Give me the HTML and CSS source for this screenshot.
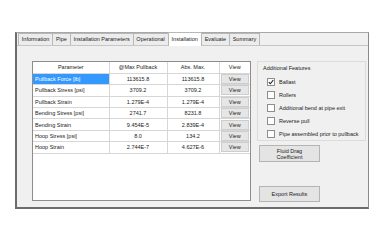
FILE: index.html
```html
<!DOCTYPE html>
<html lang="en">
<head>
  <meta charset="UTF-8" />
  <title>Installation</title>
  <link rel="stylesheet" href="styles.css">
</head>
<body>
  <div class="window">
    <div class="tabs">
      <span class="tab">Information</span>
      <span class="tab">Pipe</span>
      <span class="tab">Installation Parameters</span>
      <span class="tab">Operational</span>
      <span class="tab active">Installation</span>
      <span class="tab">Evaluate</span>
      <span class="tab">Summary</span>
    </div>
    <div class="panel">
      <div class="grid">
        <table>
          <colgroup>
            <col style="width: 76px">
            <col style="width: 58px">
            <col style="width: 52px">
            <col style="width: 31px">
          </colgroup>
          <thead>
            <tr>
              <th>Parameter</th>
              <th>@Max Pullback</th>
              <th>Abs. Max.</th>
              <th>View</th>
            </tr>
          </thead>
          <tbody id="rows"></tbody>
        </table>
      </div>
      <div class="side">
        <div class="features">
          <div class="features-title">Additional Features</div>
          <label class="check"><span class="box checked"><svg viewBox="0 0 8 8" width="6" height="6"><path d="M1 4.2 L3.1 6.3 L7 1.6" fill="none" stroke="#222" stroke-width="1.4"/></svg></span>Ballast</label>
          <label class="check"><span class="box"></span>Rollers</label>
          <label class="check"><span class="box"></span>Additional bend at pipe exit</label>
          <label class="check"><span class="box"></span>Reverse pull</label>
          <label class="check"><span class="box"></span>Pipe assembled prior to pullback</label>
        </div>
        <button class="btn btn-drag">Fluid Drag<br>Coefficient</button>
        <button class="btn btn-export">Export Results</button>
      </div>
    </div>
  </div>

  <script>
    const results = [
      { name: "Pullback Force [lb]", atMax: "113615.8", absMax: "113615.8" },
      { name: "Pullback Stress [psi]", atMax: "3709.2", absMax: "3709.2" },
      { name: "Pullback Strain", atMax: "1.279E-4", absMax: "1.279E-4" },
      { name: "Bending Stress [psi]", atMax: "2741.7", absMax: "8231.8" },
      { name: "Bending Strain", atMax: "9.454E-5", absMax: "2.839E-4" },
      { name: "Hoop Stress [psi]", atMax: "8.0", absMax: "134.2" },
      { name: "Hoop Strain", atMax: "2.744E-7", absMax: "4.627E-6" }
    ];

    const tbody = document.getElementById("rows");
    results.forEach((r, i) => {
      tbody.innerHTML += `<tr>
        <td class="name${i === 0 ? " selected" : ""}">${r.name}</td>
        <td>${r.atMax}</td>
        <td>${r.absMax}</td>
        <td class="view"><span class="view-btn">View</span></td>
      </tr>`;
    });
  </script>
</body>
</html>
```

FILE: styles.css
```css
* {
  box-sizing: border-box;
}
body {
  margin: 0;
  background: #fff;
  font-family: 'Liberation Sans', Arial, sans-serif;
  font-size: 5.5px;
  color: #222;
}
.window {
  margin: 32px 0 0 15px;
  width: 354px;
  height: 177px;
  border-left: 2px solid #6c6c6c;
  border-top: 1px solid #a8a8a8;
  border-right: 1px solid #8a8a8a;
  border-bottom: 2px solid #6c6c6c;
  background: #f0f0f0;
  display: flex;
  flex-direction: column;
}
.tabs {
  display: flex;
  align-items: flex-end;
  height: 13px;
  padding-left: 1px;
  border-bottom: 1px solid #c6c6c6;
}
.tab {
  height: 12px;
  line-height: 11px;
  padding: 0 2.8px;
  border: 1px solid #b8b8b8;
  border-bottom: none;
  margin-right: -1px;
  background: #ececec;
}
.tab.active {
  height: 14px;
  line-height: 12px;
  background: #fff;
  margin-bottom: -1px;
  padding: 0 3px;
  position: relative;
}
.panel {
  flex: 1;
  display: flex;
  gap: 6px;
  padding: 15px 0 6px 15px;
}
.grid {
  width: 219px;
  height: 140px;
  border: 1px solid #8d8d8d;
  background: #fff;
}
table {
  width: 217px;
  border-collapse: collapse;
  table-layout: fixed;
}
th, td {
  height: 11.4px;
  padding: 0 2px;
  font-weight: normal;
  text-align: center;
  white-space: nowrap;
  overflow: hidden;
  border-right: 1px solid #d6d6d6;
  border-bottom: 1px solid #d6d6d6;
}
th:last-child, td:last-child {
  border-right: none;
}
td.name {
  text-align: left;
}
td.selected {
  background: #3399ff;
  color: #fff;
}
td.view {
  padding: 0 1px;
}
.view-btn {
  display: block;
  height: 10px;
  line-height: 9px;
  background: #e6e6e6;
  border: 1px solid #cdcdcd;
}
.side {
  flex: 1;
  padding-right: 2px;
  display: flex;
  flex-direction: column;
  align-items: flex-start;
}
.features {
  width: 100%;
  height: 80px;
  border: 1px solid #dcdcdc;
  padding: 2px 0 0 5px;
}
.features-title {
  height: 11px;
  line-height: 8px;
}
.check {
  display: flex;
  align-items: center;
  height: 13px;
  padding-left: 4px;
}
.box {
  width: 8px;
  height: 8px;
  border: 1px solid #8e8e8e;
  background: #fff;
  margin-right: 4px;
  display: flex;
  align-items: center;
  justify-content: center;
}
.btn {
  font-family: inherit;
  font-size: 5.5px;
  color: #222;
  width: 61px;
  margin-left: 2px;
  padding: 0;
  background: #e4e4e4;
  border: 1px solid #b4b4b4;
  border-radius: 0;
  line-height: 6px;
}
.btn-drag {
  height: 17px;
  margin-top: 4px;
}
.btn-export {
  height: 16px;
  margin-top: 24px;
}
```
